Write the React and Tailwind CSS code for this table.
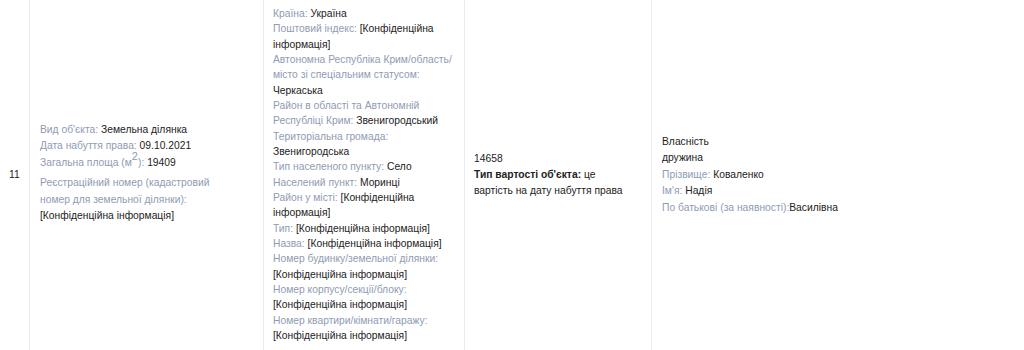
import React from "react";

const L = ({ children }) => <span className="text-[#8f9bb3]">{children}</span>;

export default function App() {
  return (
    <div
      className="w-[1024px] h-[350px] bg-white text-[#222] text-[10.3px] overflow-hidden"
      style={{ fontFamily: '"Liberation Sans", Arial, sans-serif' }}
    >
      <div className="flex items-stretch min-h-[350px]">
        {/* number */}
        <div className="w-[29px] shrink-0 flex items-center pl-[9px]">11</div>

        {/* object */}
        <div className="w-[234px] shrink-0 border-l border-[#ebebeb] pl-[10px] pr-[32px] pb-[4px] flex flex-col justify-center leading-[16.5px]">
          <div>
            <L>Вид об'єкта:</L> Земельна ділянка
          </div>
          <div>
            <L>Дата набуття права:</L> 09.10.2021
          </div>
          <div>
            <L>
              Загальна площа (м<sup className="text-[11px]">2</sup>):
            </L>{" "}
            19409
          </div>
          <div className="mt-[4px]">
            <L>Реєстраційний номер (кадастровий номер для земельної ділянки):</L>
            <div>[Конфіденційна інформація]</div>
          </div>
        </div>

        {/* address */}
        <div className="w-[201px] shrink-0 border-l border-[#ebebeb] pl-[9px] pr-[6px] pt-[6px] pb-[4px] leading-[15.33px]">
          <div>
            <L>Країна:</L> Україна
          </div>
          <div>
            <L>Поштовий індекс:</L> [Конфіденційна інформація]
          </div>
          <div>
            <L>Автономна Республіка Крим/область/ місто зі спеціальним статусом:</L> Черкаська
          </div>
          <div>
            <L>Район в області та Автономній Республіці Крим:</L> Звенигородський
          </div>
          <div>
            <L>Територіальна громада:</L> Звенигородська
          </div>
          <div>
            <L>Тип населеного пункту:</L> Село
          </div>
          <div>
            <L>Населений пункт:</L> Моринці
          </div>
          <div>
            <L>Район у місті:</L> [Конфіденційна інформація]
          </div>
          <div>
            <L>Тип:</L> [Конфіденційна інформація]
          </div>
          <div>
            <L>Назва:</L> [Конфіденційна інформація]
          </div>
          <div>
            <L>Номер будинку/земельної ділянки:</L> [Конфіденційна інформація]
          </div>
          <div>
            <L>Номер корпусу/секції/блоку:</L> [Конфіденційна інформація]
          </div>
          <div>
            <L>Номер квартири/кімнати/гаражу:</L> [Конфіденційна інформація]
          </div>
        </div>

        {/* value */}
        <div className="w-[187px] shrink-0 border-l border-[#ebebeb] pl-[9px] pr-[24px] flex flex-col justify-center leading-[16px]">
          <div>14658</div>
          <div>
            <span className="font-bold">Тип вартості об'єкта:</span> це вартість на дату набуття права
          </div>
        </div>

        {/* owner */}
        <div className="flex-1 border-l border-[#ebebeb] pl-[10px] pr-[10px] flex flex-col justify-center leading-[16.5px]">
          <div>Власність</div>
          <div>дружина</div>
          <div>
            <L>Прізвище:</L> Коваленко
          </div>
          <div>
            <L>Ім'я:</L> Надія
          </div>
          <div>
            <L>По батькові (за наявності):</L>Василівна
          </div>
        </div>
      </div>
    </div>
  );
}
